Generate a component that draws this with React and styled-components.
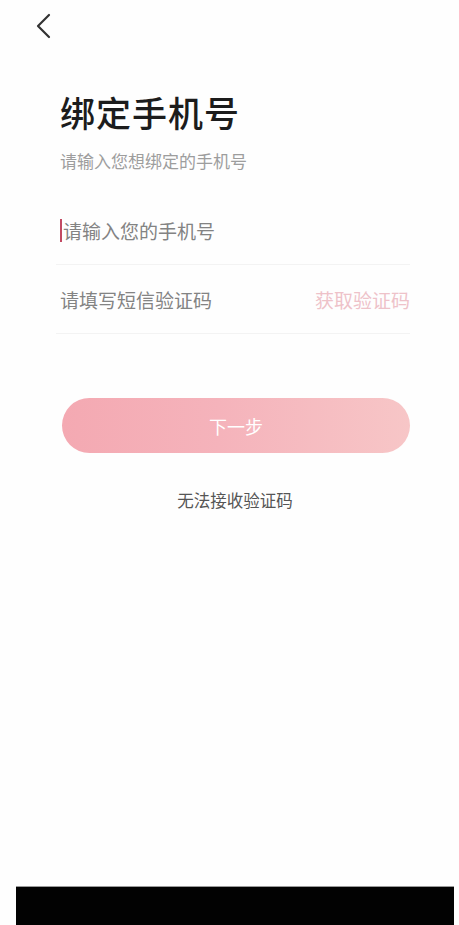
import styled, { createGlobalStyle } from "styled-components";

const GlobalStyle = createGlobalStyle`
  html, body {
    margin: 0;
    padding: 0;
    background: #fefefe;
  }
  body {
    font-family: "Noto Sans CJK SC", "Noto Sans", sans-serif;
  }
`;

const BindPhone = () => {
  return (
    <Page>
      <GlobalStyle />
      <Header>
        <BackButton aria-label="返回">
          <svg width="16" height="26" viewBox="0 0 16 26" fill="none">
            <path
              d="M13 2 L2 13 L13 24"
              stroke="#333"
              strokeWidth="2.2"
              strokeLinecap="round"
              strokeLinejoin="round"
            />
          </svg>
        </BackButton>
      </Header>

      <Content>
        <Title>绑定手机号</Title>
        <Subtitle>请输入您想绑定的手机号</Subtitle>

        <Fields>
          <FieldRow>
            <Caret />
            <Input type="tel" placeholder="请输入您的手机号" />
          </FieldRow>
          <FieldRow>
            <Input type="text" placeholder="请填写短信验证码" />
            <CodeButton>获取验证码</CodeButton>
          </FieldRow>
        </Fields>

        <NextButton>下一步</NextButton>
        <HelpLink>无法接收验证码</HelpLink>
      </Content>

      <BottomBar />
    </Page>
  );
};

const Page = styled.div`
  min-height: 925px;
  display: flex;
  flex-direction: column;
  background: #fefefe;
`;

const Header = styled.div`
  height: 52px;
  display: flex;
  align-items: flex-start;
  padding: 13px 0 0 36px;
  box-sizing: border-box;
`;

const BackButton = styled.button`
  border: none;
  background: none;
  padding: 0;
  display: flex;
  cursor: pointer;
`;

const Content = styled.div`
  flex: 1;
  padding: 0 49px 0 60px;
  display: flex;
  flex-direction: column;
`;

const Title = styled.h1`
  margin: 38px 0 0;
  font-size: 35px;
  line-height: 44px;
  font-weight: 500;
  color: #1c1c1c;
  letter-spacing: 1px;
`;

const Subtitle = styled.p`
  margin: 15px 0 0;
  font-size: 17px;
  line-height: 24px;
  color: #9d9d9d;
`;

const Fields = styled.div`
  margin-top: 23px;
  display: flex;
  flex-direction: column;
`;

const FieldRow = styled.div`
  height: 68px;
  display: flex;
  align-items: center;
  border-bottom: 1px solid #f3f3f3;
  margin-left: -4px;
  padding-left: 4px;
`;

const Caret = styled.span`
  width: 2px;
  height: 23px;
  background: #c24a63;
  margin-right: 1px;
`;

const Input = styled.input`
  flex: 1;
  min-width: 0;
  border: none;
  outline: none;
  background: transparent;
  padding: 0;
  font-family: inherit;
  font-size: 19px;
  color: #333;
  &::placeholder {
    color: #838383;
  }
`;

const CodeButton = styled.button`
  border: none;
  background: none;
  padding: 0;
  font-family: inherit;
  font-size: 19px;
  color: #eec2c9;
  cursor: pointer;
`;

const NextButton = styled.button`
  margin-top: 64px;
  margin-left: 2px;
  height: 55px;
  border: none;
  border-radius: 28px;
  background: linear-gradient(90deg, #f4a9b2 0%, #f5b3bb 45%, #f7c6c7 100%);
  color: #fff;
  font-family: inherit;
  font-size: 18px;
  cursor: pointer;
`;

const HelpLink = styled.div`
  margin-top: 35px;
  text-align: center;
  font-size: 16.5px;
  color: #555;
`;

const BottomBar = styled.div`
  height: 38px;
  margin: 0 5px 0 16px;
  background: #020202;
  border-top: 1px solid #9a9a9a;
`;

export default BindPhone;
